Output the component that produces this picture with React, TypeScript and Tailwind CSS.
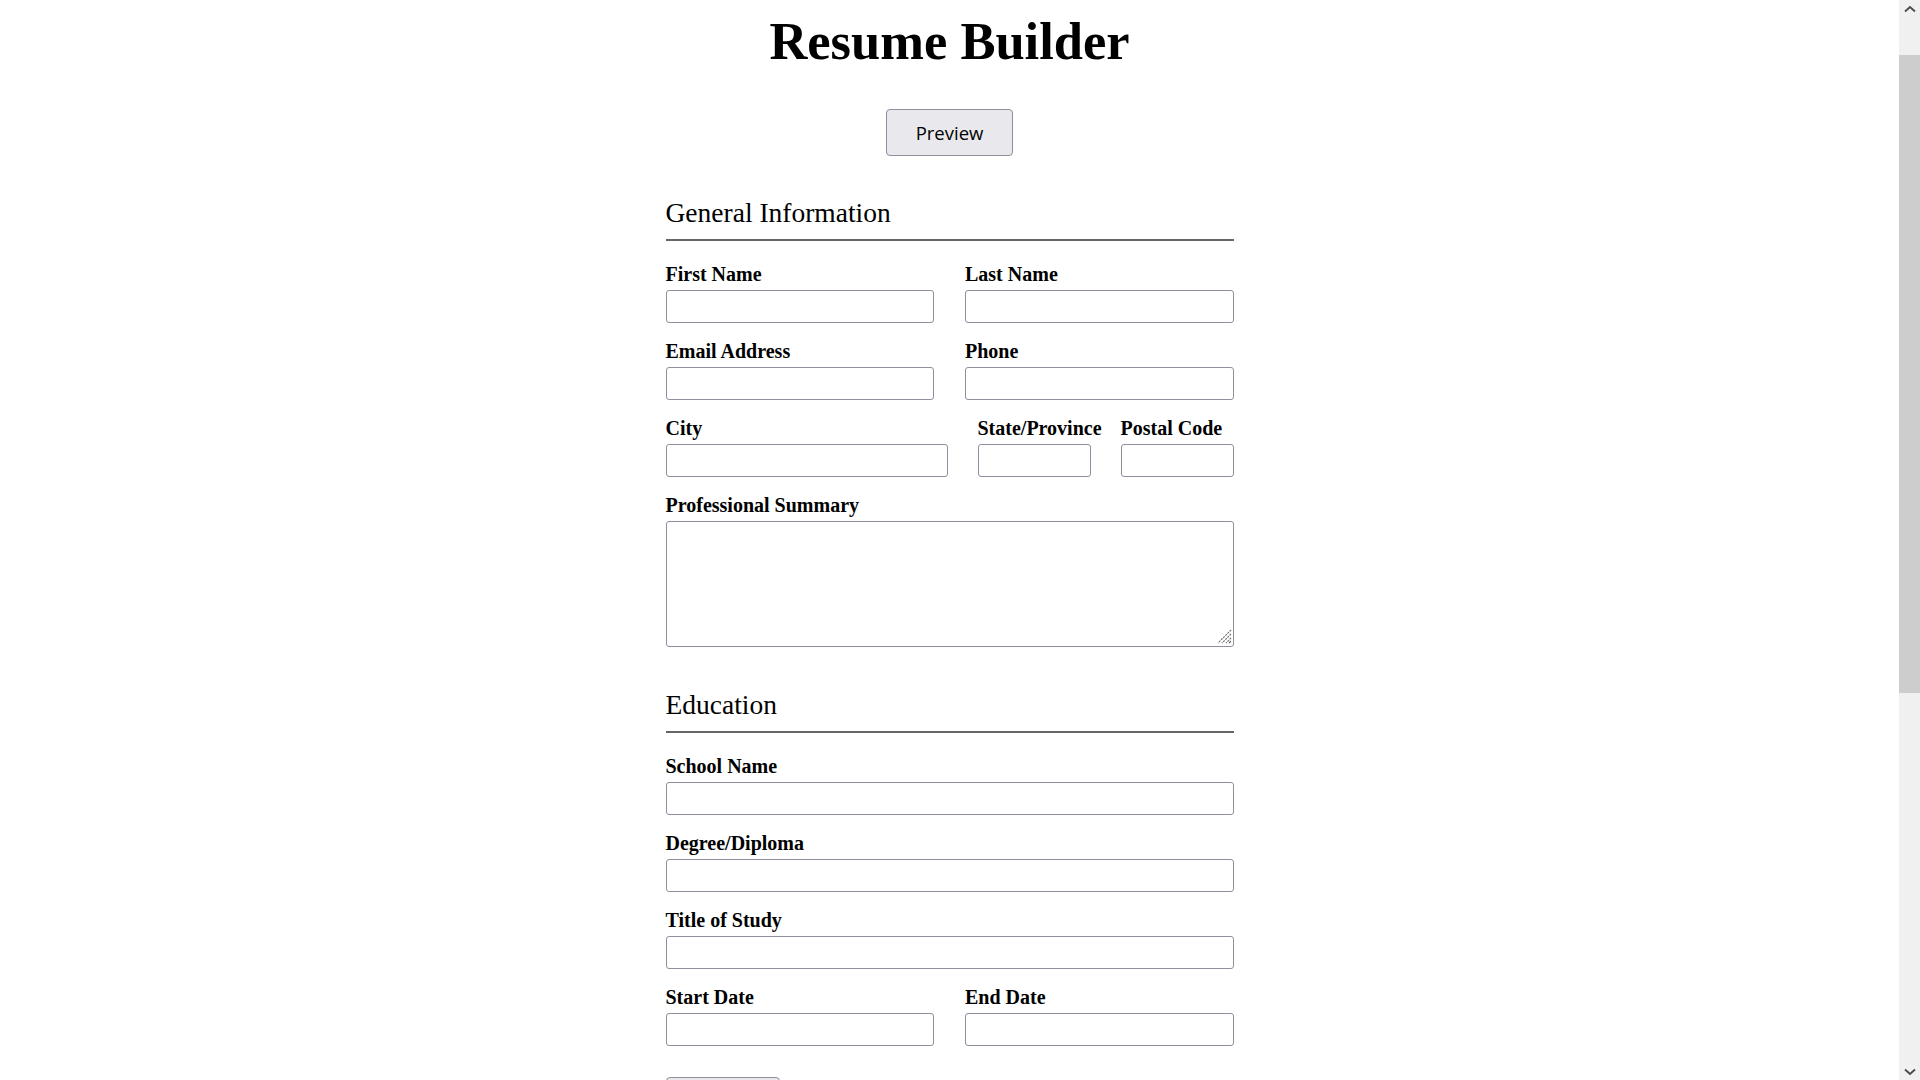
import React from "react";

type FieldProps = {
  label: string;
  textarea?: boolean;
};

function Field({ label, textarea }: FieldProps) {
  return (
    <div className="flex min-w-0 flex-col">
      <label className="mb-[5px] block whitespace-nowrap text-[20px] font-bold leading-[22px]">
        {label}
      </label>
      {textarea ? (
        <div className="relative">
          <textarea className="block h-[126px] w-full resize-none rounded-[3px] border border-[#8f8f9d] bg-white px-2 py-1 outline-none" />
          <svg
            className="pointer-events-none absolute bottom-[3px] right-[2px]"
            width="15"
            height="15"
            viewBox="0 0 15 15"
          >
            <line x1="14" y1="1" x2="1" y2="14" stroke="#6a6a6a" strokeWidth="1.1" strokeDasharray="2 1" />
            <line x1="14" y1="5" x2="5" y2="14" stroke="#6a6a6a" strokeWidth="1.1" strokeDasharray="2 1" />
            <line x1="14" y1="9" x2="9" y2="14" stroke="#6a6a6a" strokeWidth="1.1" strokeDasharray="2 1" />
            <line x1="14" y1="12" x2="12" y2="14" stroke="#6a6a6a" strokeWidth="1.1" />
          </svg>
        </div>
      ) : (
        <input
          type="text"
          className="block h-[33px] w-full rounded-[3px] border border-[#8f8f9d] bg-white px-2 outline-none"
        />
      )}
    </div>
  );
}

function SectionTitle({ children }: { children: React.ReactNode }) {
  return (
    <h2 className="border-b-2 border-[#666666] pb-[11px] text-[27.5px] font-normal leading-[31px]">
      {children}
    </h2>
  );
}

function Scrollbar() {
  return (
    <div className="flex h-full w-[21px] shrink-0 flex-col bg-[#f0f0f0]">
      <div className="flex h-[17px] items-center justify-center">
        <svg width="12" height="8" viewBox="0 0 12 8">
          <polyline points="1,6.5 6,2 11,6.5" fill="none" stroke="#4a4a4a" strokeWidth="1.8" />
        </svg>
      </div>
      <div className="mt-[38px] h-[638px] w-full bg-[#cdcdcd]" />
      <div className="flex-1" />
      <div className="flex h-[17px] items-center justify-center">
        <svg width="12" height="8" viewBox="0 0 12 8">
          <polyline points="1,1.5 6,6 11,1.5" fill="none" stroke="#4a4a4a" strokeWidth="1.8" />
        </svg>
      </div>
    </div>
  );
}

export default function App() {
  return (
    <div className="flex h-screen w-full overflow-hidden bg-white font-['Liberation_Serif','Times_New_Roman',serif] text-black">
      <main className="min-w-0 flex-1 overflow-hidden">
        <div className="mx-auto flex w-[568px] flex-col items-center pt-[11px]">
          <h1 className="whitespace-nowrap text-[52.5px] font-bold leading-[60px]">Resume Builder</h1>
          <button
            type="button"
            className="mt-[38px] h-[47px] rounded-[4px] border border-[#8f8f9d] bg-[#e9e9ed] px-[29px] font-['Open_Sans','Noto_Sans',sans-serif] text-[18.5px] leading-[24px] text-black"
          >
            Preview
          </button>

          <form className="mt-[41px] flex w-full flex-col">
            <section className="flex flex-col">
              <SectionTitle>General Information</SectionTitle>
              <div className="mt-[22px] flex flex-col gap-[17px]">
                <div className="grid grid-cols-2 gap-x-[31px]">
                  <Field label="First Name" />
                  <Field label="Last Name" />
                </div>
                <div className="grid grid-cols-2 gap-x-[31px]">
                  <Field label="Email Address" />
                  <Field label="Phone" />
                </div>
                <div className="grid grid-cols-[1fr_113px_113px] gap-x-[30px]">
                  <Field label="City" />
                  <Field label="State/Province" />
                  <Field label="Postal Code" />
                </div>
                <Field label="Professional Summary" textarea />
              </div>
            </section>

            <section className="mt-[42px] flex flex-col">
              <SectionTitle>Education</SectionTitle>
              <div className="mt-[22px] flex flex-col gap-[17px]">
                <Field label="School Name" />
                <Field label="Degree/Diploma" />
                <Field label="Title of Study" />
                <div className="grid grid-cols-2 gap-x-[31px]">
                  <Field label="Start Date" />
                  <Field label="End Date" />
                </div>
              </div>
              <div className="mt-[31px] flex">
                <button
                  type="button"
                  className="h-[40px] w-[114px] rounded-[4px] border border-[#8f8f9d] bg-[#e9e9ed] font-['Open_Sans','Noto_Sans',sans-serif] text-[15px] text-black"
                >
                  Add Education
                </button>
              </div>
            </section>

            <section className="mt-[43px] flex flex-col">
              <SectionTitle>Experience</SectionTitle>
              <div className="mt-[22px] flex flex-col gap-[17px]">
                <Field label="Company Name" />
                <Field label="Position Title" />
                <Field label="Main Responsibilities" textarea />
                <div className="grid grid-cols-2 gap-x-[31px]">
                  <Field label="Start Date" />
                  <Field label="End Date" />
                </div>
              </div>
              <div className="mt-[31px] flex">
                <button
                  type="button"
                  className="h-[40px] w-[120px] rounded-[4px] border border-[#8f8f9d] bg-[#e9e9ed] font-['Open_Sans','Noto_Sans',sans-serif] text-[15px] text-black"
                >
                  Add Experience
                </button>
              </div>
            </section>
          </form>
        </div>
      </main>
      <Scrollbar />
    </div>
  );
}
